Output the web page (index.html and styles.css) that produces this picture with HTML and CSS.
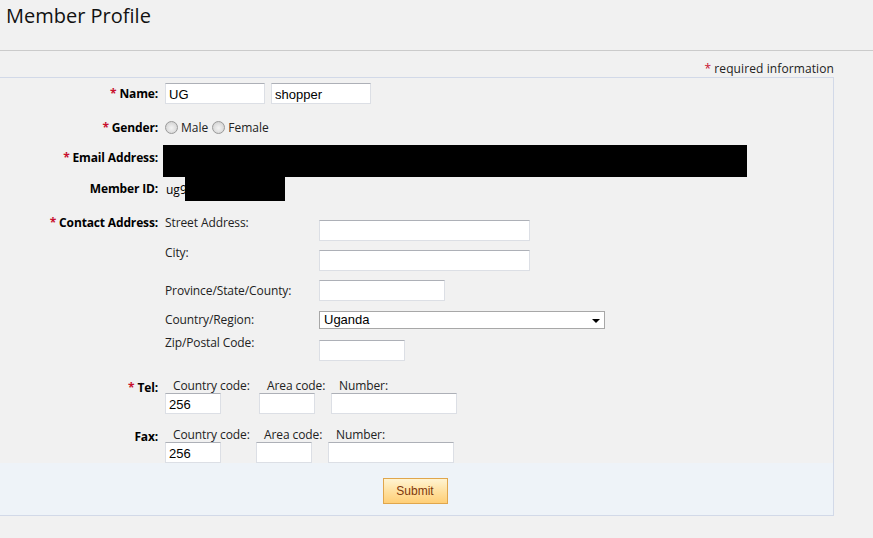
FILE: index.html
```html
<!DOCTYPE html>
<html>
<head>
<meta charset="utf-8">
<title>Member Profile</title>
<link rel="stylesheet" href="styles.css">
</head>
<body>
<header class="page-head"><h1 class="page-title">Member Profile</h1></header>
<div class="req-note"><span class="star">*</span> required information</div>
<form class="profile">
  <div class="fields">
    <div class="row row-name">
      <label class="lbl"><span class="star">*</span> Name:</label>
      <div class="ctl">
        <input class="txt w-name" type="text" value="UG">
        <input class="txt w-name" type="text" value="shopper">
      </div>
    </div>
    <div class="row row-gender">
      <label class="lbl"><span class="star">*</span> Gender:</label>
      <div class="ctl radios">
        <span class="radio"></span><span class="opt">Male</span>
        <span class="radio"></span><span class="opt">Female</span>
      </div>
    </div>
    <div class="row row-email">
      <label class="lbl"><span class="star">*</span> Email Address:</label>
      <div class="ctl"><div class="redact redact-email"></div></div>
    </div>
    <div class="row row-id">
      <label class="lbl">Member ID:</label>
      <div class="ctl id-val"><span class="plain">ug9</span><div class="redact redact-id"></div></div>
    </div>
    <div class="row row-contact">
      <label class="lbl"><span class="star">*</span> Contact Address:</label>
      <div class="ctl addr">
        <div class="sub sub-hi"><span class="sublbl">Street Address:</span><input class="txt w-long" type="text"></div>
        <div class="sub sub-hi"><span class="sublbl">City:</span><input class="txt w-long" type="text"></div>
        <div class="sub sub-mid sub-prov"><span class="sublbl">Province/State/County:</span><input class="txt w-prov" type="text"></div>
        <div class="sub sub-mid sub-country"><span class="sublbl">Country/Region:</span>
          <div class="select-wrap"><select class="sel"><option>Uganda</option></select><span class="caret"></span></div>
        </div>
        <div class="sub sub-hi sub-zip"><span class="sublbl">Zip/Postal Code:</span><input class="txt w-zip" type="text"></div>
      </div>
    </div>
    <div class="row row-tel">
      <label class="lbl"><span class="star">*</span> Tel:</label>
      <div class="ctl phone">
        <div class="pcol pc-a"><span class="plbl">Country code:</span><input class="txt w-code" type="text" value="256"></div>
        <div class="pcol pc-b"><span class="plbl">Area code:</span><input class="txt w-code" type="text"></div>
        <div class="pcol"><span class="plbl">Number:</span><input class="txt w-num" type="text"></div>
      </div>
    </div>
    <div class="row row-fax">
      <label class="lbl">Fax:</label>
      <div class="ctl phone">
        <div class="pcol pc-a-fax"><span class="plbl">Country code:</span><input class="txt w-code" type="text" value="256"></div>
        <div class="pcol pc-b"><span class="plbl">Area code:</span><input class="txt w-code" type="text"></div>
        <div class="pcol"><span class="plbl">Number:</span><input class="txt w-num" type="text"></div>
      </div>
    </div>
  </div>
  <div class="actions"><button class="submit" type="button">Submit</button></div>
</form>
</body>
</html>
```
FILE: styles.css
```css
html, body {
  margin: 0;
  padding: 0;
  background: #f1f1f1;
  font-family: "Open Sans", "Noto Sans", sans-serif;
  font-size: 12px;
  color: #000;
  overflow: hidden;
}

.page-head {
  height: 50px;
  border-bottom: 1px solid #cbcbcb;
  box-sizing: content-box;
}
.page-title {
  margin: 0;
  padding: 4px 0 0 6px;
  font-size: 20px;
  line-height: 24px;
  font-weight: normal;
  color: #111;
  letter-spacing: 0;
}

.req-note {
  height: 26px;
  box-sizing: border-box;
  padding: 10px 39px 0 0;
  line-height: 16px;
  text-align: right;
  color: #222;
  letter-spacing: 0.1px;
}
.star { color: #c8102e; }

.profile {
  margin: 0 0 0 -1px;
  width: 835px;
  box-sizing: border-box;
  border: 1px solid #d2d9e8;
}

.fields { padding-bottom: 0; }

.row {
  display: grid;
  grid-template-columns: 158px 1fr;
  column-gap: 7px;
}
.lbl {
  text-align: right;
  font-weight: bold;
  line-height: 16px;
  letter-spacing: -0.15px;
  white-space: nowrap;
}
.ctl { display: flex; align-items: center; }

.txt {
  box-sizing: border-box;
  height: 21px;
  margin: 0;
  padding: 1px 3px 0;
  border: 1px solid #dcdfe5;
  border-top-color: #adb0b7;
  background: #fff;
  font-family: "Liberation Sans", Arial, sans-serif;
  font-size: 13px;
  color: #000;
  outline: none;
}
.w-name { width: 100px; margin-right: 6px; }
.w-long { width: 211px; }
.w-prov { width: 126px; }
.w-zip { width: 86px; }
.w-code { width: 56px; }
.w-num { width: 126px; }

.row-name { margin-top: 5px; align-items: center; }

.row-gender { margin-top: 13px; height: 21px; align-items: center; }
.radios { gap: 3px; }
.radio {
  display: inline-block;
  width: 11px;
  height: 11px;
  border-radius: 50%;
  border: 1px solid #9a9a9a;
  background: radial-gradient(circle at 50% 55%, #f4f4f4 0, #e2e2e2 45%, #c9c9c9 100%);
}
.opt { margin-right: 1px; color: #222; }

.row-email { margin-top: 7px; align-items: start; }
.row-email .lbl { padding-top: 5px; }
.redact { background: #000; }
.redact-email { width: 584px; height: 32px; margin-left: -2px; }

.row-id { align-items: center; height: 24px; }
.plain { margin-left: 1px; }
.redact-id { width: 100px; height: 24px; margin-left: -2px; }

.row-contact { margin-top: 14px; align-items: start; }
.addr { flex-direction: column; align-items: stretch; }
.sub {
  display: grid;
  grid-template-columns: 154px auto;
  justify-content: start;
  align-items: center;
}
.sublbl { line-height: 16px; color: #222; letter-spacing: -0.1px; white-space: nowrap; }
.sub-hi .sublbl { margin-bottom: 14px; }
.sub-prov { margin-top: 5px; }
.sub-country { margin-top: 10px; }
.sub-zip { margin-top: 6px; }

.select-wrap { position: relative; width: 286px; height: 18px; }
.sel {
  appearance: none;
  -webkit-appearance: none;
  box-sizing: border-box;
  width: 286px;
  height: 18px;
  margin: 0;
  padding: 0 0 0 4px;
  border: 1px solid #a7a7a7;
  border-radius: 0;
  background: #fff;
  font-family: "Liberation Sans", Arial, sans-serif;
  font-size: 13px;
  line-height: 16px;
  color: #000;
}
.caret {
  position: absolute;
  right: 5px;
  top: 8px;
  width: 0;
  height: 0;
  border-left: 4px solid transparent;
  border-right: 4px solid transparent;
  border-top: 4px solid #000;
  pointer-events: none;
}

.row-tel { margin-top: 13px; align-items: start; }
.row-tel .lbl, .row-fax .lbl { padding-top: 2px; }
.row-fax { margin-top: 13px; align-items: start; }
.phone { align-items: flex-start; }
.pcol { display: flex; flex-direction: column; align-items: flex-start; }
.pc-a { width: 94px; }
.pc-a-fax { width: 91px; }
.pc-b { width: 72px; }
.plbl { padding: 0 0 0 8px; line-height: 15px; color: #222; letter-spacing: -0.1px; white-space: nowrap; }

.actions {
  height: 52px;
  background: #eef3f8;
  display: flex;
  justify-content: center;
  align-items: flex-start;
}
.submit {
  margin-top: 15px;
  width: 65px;
  height: 26px;
  box-sizing: border-box;
  border: 1px solid #e0a64c;
  background: linear-gradient(#fff4d2, #ffdf9c 55%, #ffcf77);
  color: #80380c;
  font-family: "Liberation Sans", Arial, sans-serif;
  font-size: 12px;
  padding: 0;
  margin-left: -3px;
}
```
